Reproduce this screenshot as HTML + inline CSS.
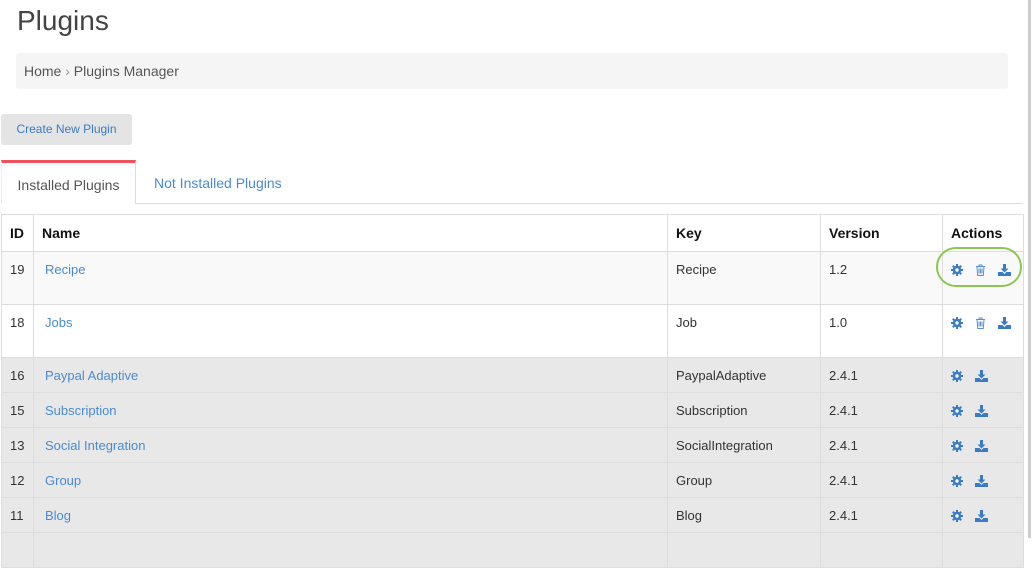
<!DOCTYPE html>
<html><head><style>
body{margin:0;width:1033px;height:538px;overflow:hidden;background:#fff;font-family:"Liberation Sans",Arial,sans-serif;font-size:14px;color:#333;position:relative}
h1{position:absolute;left:17px;top:5px;margin:0;font-weight:400;font-size:28px;color:#444}
.bc{position:absolute;left:16px;top:53px;width:992px;height:36px;background:#f5f5f5;border-radius:3px;line-height:36px;font-size:14px;color:#555;text-indent:8px}
.btn{position:absolute;left:1px;top:114px;width:131px;height:31px;background:#e4e4e4;border-radius:3px;color:#3a7cc4;font-size:12px;line-height:31px;text-align:center}
.tabline{position:absolute;left:1px;top:203px;width:1022px;height:1px;background:#ddd}
.tab1{position:absolute;left:1px;top:160px;width:135px;height:44px;border-top:3px solid #f0525c;border-right:1px solid #ddd;background:#fff;color:#555;font-size:14px;line-height:44px;text-align:center;box-sizing:border-box;border-left:1px solid #eee}
.tab2{position:absolute;left:154px;top:175px;color:#4a8bd0;font-size:14px}
table{position:absolute;left:1px;top:214px;width:1022px;border-collapse:collapse;font-size:13px;table-layout:fixed}
td,th{border:1px solid #ddd;padding:0 8px;vertical-align:top;text-align:left;line-height:16px}
th{vertical-align:middle;font-size:14px;color:#111}
tr.h{height:37px}
td{padding-top:10px;color:#333}
a{color:#4a8bd0}
td.n{padding-left:11px}
tr.big{height:53px}
tr.s{height:35px}
tr.s td{background:#e8e8e8}
tr.r1 td{background:#f9f9f9}
td:last-child{white-space:nowrap;padding-right:0}
.ic{display:inline-block;vertical-align:middle;margin-right:12px}
.sb{position:absolute;left:1028px;top:0;width:3px;height:538px;background:#ccc}
.ring{position:absolute;left:936px;top:247px;width:86px;height:40px;border:2px solid #8cc850;border-radius:22px;box-sizing:border-box}
</style></head><body>
<h1>Plugins</h1>
<div class="bc">Home <span style="color:#999">&#8250;</span> Plugins Manager</div>
<div class="btn">Create New Plugin</div>
<div class="tabline"></div>
<div class="tab1">Installed Plugins</div>
<div class="tab2">Not Installed Plugins</div>
<table>
<colgroup><col style="width:32px"><col style="width:634px"><col style="width:153px"><col style="width:122px"><col style="width:81px"></colgroup>
<tr class="h"><th>ID</th><th>Name</th><th>Key</th><th>Version</th><th>Actions</th></tr>
<tr class="big r1"><td>19</td><td class="n"><a>Recipe</a></td><td>Recipe</td><td>1.2</td><td>G T D</td></tr>
<tr class="big"><td>18</td><td class="n"><a>Jobs</a></td><td>Job</td><td>1.0</td><td>G T D</td></tr>
<tr class="s"><td>16</td><td class="n"><a>Paypal Adaptive</a></td><td>PaypalAdaptive</td><td>2.4.1</td><td>G D</td></tr>
<tr class="s"><td>15</td><td class="n"><a>Subscription</a></td><td>Subscription</td><td>2.4.1</td><td>G D</td></tr>
<tr class="s"><td>13</td><td class="n"><a>Social Integration</a></td><td>SocialIntegration</td><td>2.4.1</td><td>G D</td></tr>
<tr class="s"><td>12</td><td class="n"><a>Group</a></td><td>Group</td><td>2.4.1</td><td>G D</td></tr>
<tr class="s"><td>11</td><td class="n"><a>Blog</a></td><td>Blog</td><td>2.4.1</td><td>G D</td></tr>
<tr class="s"><td></td><td></td><td></td><td></td><td></td></tr>
</table>
<div class="ring"></div>
<div class="sb"></div>
<script>
var G='<svg class="ic" width="12" height="12" viewBox="0 0 12 12"><g fill="#3a7cc4"><circle cx="6" cy="6" r="4.2"/><rect x="5" y="0" width="2" height="12"/><rect x="0" y="5" width="12" height="2"/><rect x="5" y="0" width="2" height="12" transform="rotate(45 6 6)"/><rect x="5" y="0" width="2" height="12" transform="rotate(-45 6 6)"/></g><circle cx="6" cy="6" r="1.7" fill="#fff"/></svg>';
var T='<svg class="ic" width="11" height="12" viewBox="0 0 11 12"><g fill="none" stroke="#5a8fd0" stroke-width="1"><path d="M1 2.5h9M4 2.5V1h3v1.5M2 2.5l.7 9h5.6l.7-9M4 4.5v5M5.5 4.5v5M7 4.5v5"/></g></svg>';
var D='<svg class="ic" width="13" height="12" viewBox="0 0 13 12"><g fill="#3a7cc4"><rect x="5" y="0" width="3" height="5"/><path d="M2.5 4.5h8L6.5 8.5z"/><path d="M0 8h4.5l2 2 2-2H13v4H0z"/></g></svg>';
document.querySelectorAll('td:last-child').forEach(function(td){var t=td.textContent.trim();if(!t)return;td.innerHTML=t.split(' ').map(function(c){return c=='G'?G:c=='T'?T:D}).join('');td.style.paddingTop='9px'});
</script>
</body></html>
